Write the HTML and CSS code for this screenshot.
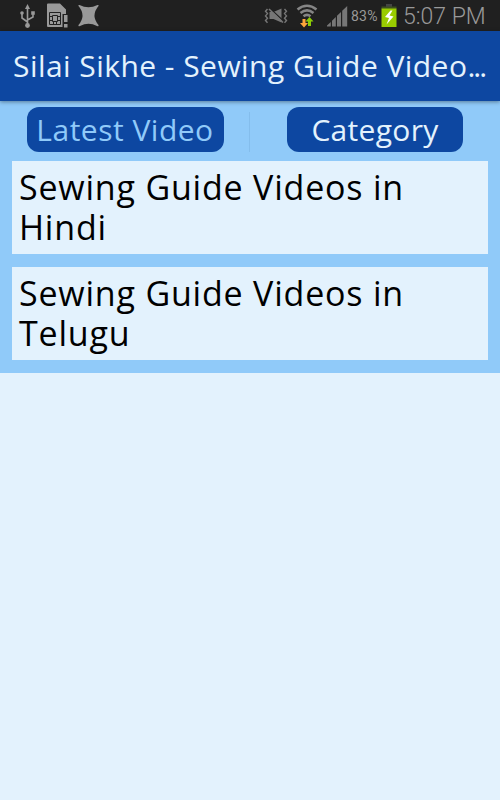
FILE: index.html
```
<!DOCTYPE html>
<html lang="en">
<head>
  <meta charset="UTF-8" />
  <meta name="viewport" content="width=device-width, initial-scale=1.0"/>
  <title>Silai Sikhe - Sewing Guide Videos</title>
  <link rel="stylesheet" href="styles.css">
</head>
<body>
  <div class="status-bar">
    <div class="status-left">
      <!-- usb -->
      <svg width="16" height="26" viewBox="0 0 16 26" fill="none" stroke="#999" stroke-width="1.6">
        <path d="M7.5 5V22M7.5 19L2 15V10M7.5 17L13 14V10"/>
        <path d="M7.5 1L10 6H5z" fill="#999" stroke="none"/>
        <circle cx="7.5" cy="22.5" r="2.4" fill="#999" stroke="none"/>
        <circle cx="2" cy="10" r="1.8" fill="#999" stroke="none"/>
        <path d="M11.2 8.2h3.6v3.6h-3.6z" fill="#999" stroke="none"/>
      </svg>
      <!-- sim card -->
      <svg width="22" height="26" viewBox="0 0 22 26">
        <path d="M2 0.5H14L20 6.5V11H17V24H2Q1 24 1 23V1.5Q1 .5 2 .5z" fill="#999"/>
        <path d="M3.5 9.5H14.5V21.5H3.5zM6.5 12.5H11.5V18.5H6.5zM3.5 13.5H6M3.5 17.5H6M12 13.5H14.5M12 17.5H14.5M7.5 19V21.5M10.5 19V21.5" fill="none" stroke="#222" stroke-width="1"/>
        <path d="M16.5 11H17.5V24H16.5z" fill="#222"/>
        <path d="M18 12H21.5V19H18zM18 21H21.5V24.5H18z" fill="#999"/>
      </svg>
      <svg width="22" height="26" viewBox="0 0 22 26">
        <path d="M1.5 2Q10.5 6.5 19.5 2Q21 1.5 20.5 3Q12.5 12.5 20.5 22Q21 24 19 23Q10.5 18.5 2 23Q0 24 .5 22Q8.5 12.5 .5 3Q0 1.5 1.5 2z" fill="#999"/>
      </svg>
    </div>
    <div class="status-right">
      <!-- vibrate -->
      <svg class="vibrate" width="24" height="26" viewBox="0 0 24 26" fill="none" stroke="#777" stroke-width="1.4">
        <path d="M3.5 6L1.5 8.3L3.5 10.6L1.5 12.9L3.5 15.2L1.5 17.5L3.5 19.8M20.5 6L22.5 8.3L20.5 10.6L22.5 12.9L20.5 15.2L22.5 17.5L20.5 19.8"/>
        <path d="M5.5 9H9.5L17.5 5.5V19.5L9.5 16H5.5z" fill="#777" stroke="none"/>
        <path d="M6 5.5L20 18.5" stroke="#222" stroke-width="1.4"/>
        <path d="M5 6L19 19.5" stroke-width="1.6"/>
      </svg>
      <svg class="wifi" width="22" height="26" viewBox="0 0 22 26">
        <g fill="none" stroke="#858585" stroke-width="2.6">
          <path d="M1.5 6.5Q11 -1 20.5 6.5"/>
          <path d="M4.5 10Q11 4.8 17.5 10"/>
          <path d="M7.5 13.2Q11 10.5 14.5 13.2"/>
        </g>
        <path d="M6.5 16H9.5V20H12L8 24.5L4 20H6.5z" fill="#ffa53a"/>
        <path d="M12 23H15V18.5H17.5L13.5 14L9.5 18.5H12z" fill="#8ccc05"/>
      </svg>
      <svg class="signal" width="21" height="21" viewBox="0 0 21 21" fill="#777">
        <path d="M0 20.5V19.5L3.8 16V20.5zM5 20.5V14.8L8.8 11V20.5zM10 20.5V9.8L14 6V20.5zM15.2 20.5V4.8L20.2 0V20.5z"/>
      </svg>
      <span class="percent">83%</span>
      <svg class="battery" width="16" height="24" viewBox="0 0 16 24">
        <path d="M5 0H11V3H5z" fill="#444"/>
        <path d="M.5 2.5H15.5V5H.5z" fill="#3d4f20"/>
        <path d="M.5 4.5H15.5V23H.5z" fill="#99cc00"/>
        <path d="M9.5 6.5L4 13L8 14L5.5 20.5L12.5 12.5L8.5 11.5L11.5 6.5z" fill="#fff"/>
      </svg>
      <span class="clock">5:07 PM</span>
    </div>
  </div>

  <div class="app-bar">
    <h1>Silai Sikhe - Sewing Guide Video<span class="dots">...</span></h1>
  </div>

  <div class="content">
    <div class="tabs">
      <div class="tab">
        <button class="latest">Latest Video</button>
      </div>
      <div class="tab">
        <button class="category">Category</button>
      </div>
    </div>
    <div class="list">
      <div class="list-item">Sewing Guide Videos in<br>Hindi</div>
      <div class="list-item">Sewing Guide Videos in<br>Telugu</div>
    </div>
  </div>
</body>
</html>
```
FILE: styles.css
```
* {
  margin: 0;
  padding: 0;
  box-sizing: border-box;
}

html, body {
  width: 100%;
  height: 100%;
  background: #e3f2fd;
  overflow: hidden;
  font-family: "Open Sans", "Noto Sans", sans-serif;
}

.status-bar {
  display: flex;
  justify-content: space-between;
  height: 31px;
  padding: 3px 14px 0 20px;
  background: #202020;
}

.status-left {
  display: flex;
  gap: 10px;
}

.status-right {
  display: flex;
  align-items: flex-start;
  font-family: Roboto, sans-serif;
  color: #999;
}

.wifi {
  margin-left: 8px;
}

.signal {
  margin: 3px 3px 0 9px;
}

.percent {
  width: 28px;
  font-size: 14px;
  line-height: 27px;
  letter-spacing: 0.2px;
}

.battery {
  margin: 1px 6px 0 2px;
}

.clock {
  width: 83px;
  font-size: 23px;
  line-height: 27px;
  font-weight: 300;
  white-space: nowrap;
}

.app-bar {
  position: relative;
  display: flex;
  align-items: center;
  height: 70px;
  padding-left: 13px;
  background: #0d47a1;
  box-shadow: 0 1px 4px rgba(0, 0, 0, 0.4);
}

.app-bar h1 {
  color: #e3f2fd;
  font-size: 30px;
  font-weight: 400;
  line-height: 40px;
  letter-spacing: 0.45px;
  white-space: nowrap;
}

.app-bar .dots {
  letter-spacing: -2px;
}

.content {
  height: 272px;
  padding-top: 6px;
  background: #90caf9;
}

.tabs {
  display: flex;
  height: 54px;
}

.tab {
  flex: 1;
  display: flex;
  justify-content: center;
  height: 45px;
}

.tab:first-child {
  background: linear-gradient(#84bdec, #84bdec) right 5px / 1px 40px no-repeat;
}

.tab button {
  height: 45px;
  border: none;
  border-radius: 12px;
  background: #0d47a1;
  color: #e3f2fd;
  font-family: inherit;
  font-size: 30px;
  line-height: 45px;
  letter-spacing: 0.3px;
  white-space: nowrap;
}

.tab .latest {
  width: 197px;
  color: #90caf9;
  letter-spacing: 0.5px;
}

.tab .category {
  width: 176px;
}

.list {
  display: flex;
  flex-direction: column;
  gap: 13px;
  padding: 0 12px;
}

.list-item {
  height: 93px;
  padding: 6px 7px;
  background: #e3f2fd;
  color: #000;
  font-size: 34px;
  line-height: 40px;
  letter-spacing: 0.8px;
}
```
